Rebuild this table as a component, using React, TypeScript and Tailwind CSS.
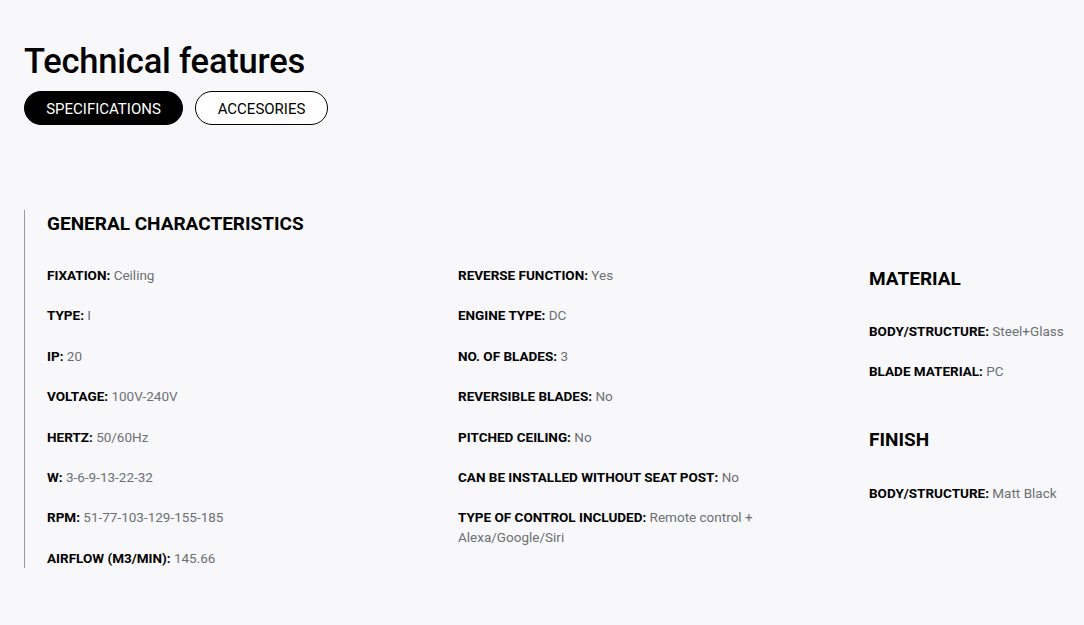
import React from "react";

type Spec = { label: string; value: string };

const general: Spec[][] = [
  [
    { label: "FIXATION", value: "Ceiling" },
    { label: "TYPE", value: "I" },
    { label: "IP", value: "20" },
    { label: "VOLTAGE", value: "100V-240V" },
    { label: "HERTZ", value: "50/60Hz" },
    { label: "W", value: "3-6-9-13-22-32" },
    { label: "RPM", value: "51-77-103-129-155-185" },
    { label: "AIRFLOW (M3/MIN)", value: "145.66" },
  ],
  [
    { label: "REVERSE FUNCTION", value: "Yes" },
    { label: "ENGINE TYPE", value: "DC" },
    { label: "NO. OF BLADES", value: "3" },
    { label: "REVERSIBLE BLADES", value: "No" },
    { label: "PITCHED CEILING", value: "No" },
    { label: "CAN BE INSTALLED WITHOUT SEAT POST", value: "No" },
    { label: "TYPE OF CONTROL INCLUDED", value: "Remote control + Alexa/Google/Siri" },
  ],
];

const material: Spec[] = [
  { label: "BODY/STRUCTURE", value: "Steel+Glass" },
  { label: "BLADE MATERIAL", value: "PC" },
];

const finish: Spec[] = [{ label: "BODY/STRUCTURE", value: "Matt Black" }];

function Row({ spec }: { spec: Spec }) {
  return (
    <p className="text-[13.5px] leading-[20px] text-[#6c6f74]">
      <strong className="font-bold text-black">{spec.label}:</strong> {spec.value}
    </p>
  );
}

function SpecList({ items }: { items: Spec[] }) {
  return (
    <div className="flex flex-col gap-[20.4px]">
      {items.map((s, i) => (
        <Row key={i} spec={s} />
      ))}
    </div>
  );
}

export default function App() {
  return (
    <div
      className="min-h-screen overflow-hidden bg-[#f8f8fa] px-6 pt-[40px] text-black"
      style={{ fontFamily: "Roboto, 'Liberation Sans', sans-serif" }}
    >
      <h2 className="text-[34.5px] leading-[42px] font-medium tracking-[-0.2px]">Technical features</h2>

      <div className="mt-[9px] flex gap-3">
        <button className="h-[34px] w-[159px] rounded-full border border-black bg-black pt-[3px] text-[15px] text-white">
          SPECIFICATIONS
        </button>
        <button className="h-[34px] w-[133px] rounded-full border border-black bg-white pt-[3px] text-[15px] text-black">
          ACCESORIES
        </button>
      </div>

      <section className="mt-[85px] border-l border-[#9a9a9a] pl-[22px]">
        <h3 className="pt-px text-[19px] leading-[26px] font-bold">GENERAL CHARACTERISTICS</h3>

        <div className="mt-[28px] flex">
          {general.map((col, i) => (
            <div key={i} className="w-[411px] shrink-0 pr-[40px]">
              <SpecList items={col} />
            </div>
          ))}

          <div className="w-[411px] shrink-0">
            <h3 className="text-[19px] leading-[28px] font-bold">MATERIAL</h3>
            <div className="mt-[28px]">
              <SpecList items={material} />
            </div>
            <h3 className="mt-[45px] text-[19px] leading-[28px] font-bold">FINISH</h3>
            <div className="mt-[29px]">
              <SpecList items={finish} />
            </div>
          </div>
        </div>
      </section>
    </div>
  );
}
